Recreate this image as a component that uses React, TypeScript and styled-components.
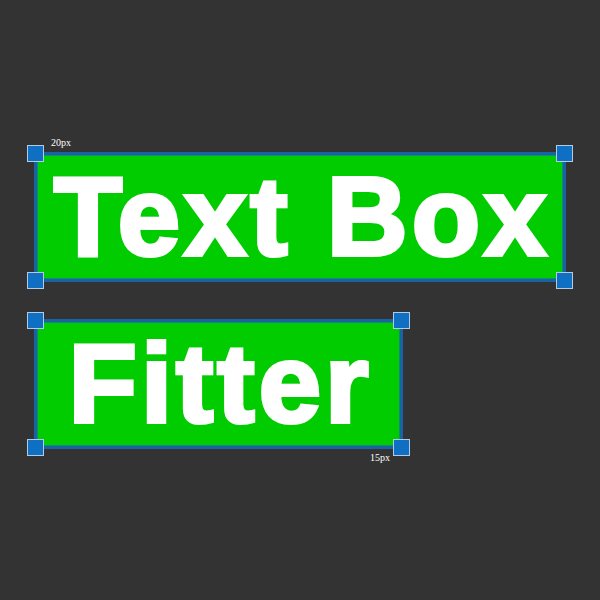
import React from 'react';
import styled, { createGlobalStyle } from 'styled-components';

const GlobalStyle = createGlobalStyle`
  html, body {
    margin: 0;
    padding: 0;
    background: #333333;
  }
  * {
    box-sizing: border-box;
  }
`;

const Canvas = styled.div`
  width: 600px;
  height: 600px;
  display: flex;
  flex-direction: column;
  align-items: flex-start;
  gap: 37px;
  padding: 152px 0 0 34px;
  background: #333333;
`;

const FitBox = styled.div<{ $width: number; $fontSize: number }>`
  position: relative;
  width: ${(p) => p.$width}px;
  height: 130px;
  display: flex;
  align-items: center;
  justify-content: center;
  background: #00cc00;
  border: 3px solid #1a62a6;
  box-shadow: inset 0 0 0 1px #0d8f6e;
  font-family: 'Liberation Sans', Arial, sans-serif;
  font-weight: 700;
  font-size: ${(p) => p.$fontSize}px;
  line-height: 1;
  color: #ffffff;
  white-space: nowrap;
`;

// heavier face than the bold cut: thicken strokes and open the spacing to match
const Label = styled.span`
  display: block;
  padding-left: 4px;
  letter-spacing: 4px;
  -webkit-text-stroke: 4px #ffffff;
  paint-order: stroke fill;
`;

const Handle = styled.div<{ $x: 'left' | 'right'; $y: 'top' | 'bottom' }>`
  position: absolute;
  ${(p) => p.$x}: -10px;
  ${(p) => p.$y}: -10px;
  width: 17px;
  height: 17px;
  background: #0f6fc2;
  border: 1px solid #b3cbe2;
`;

const Padding = styled.span<{ $corner: 'top' | 'bottom' }>`
  position: absolute;
  font-family: 'Liberation Serif', 'Times New Roman', serif;
  font-size: 10px;
  line-height: 12px;
  font-weight: 400;
  color: #ffffff;
  -webkit-text-stroke: 0;
  ${(p) =>
    p.$corner === 'top'
      ? 'top: -18px; left: 14px;'
      : 'top: calc(100% + 6px); right: 10px;'}
`;

const corners: Array<['left' | 'right', 'top' | 'bottom']> = [
  ['left', 'top'],
  ['right', 'top'],
  ['left', 'bottom'],
  ['right', 'bottom'],
];

const Selection: React.FC<{
  text: string;
  width: number;
  fontSize: number;
  padding: string;
  labelAt: 'top' | 'bottom';
}> = ({ text, width, fontSize, padding, labelAt }) => (
  <FitBox $width={width} $fontSize={fontSize}>
    <Label>{text}</Label>
    {corners.map(([x, y]) => (
      <Handle key={x + y} $x={x} $y={y} />
    ))}
    <Padding $corner={labelAt}>{padding}</Padding>
  </FitBox>
);

export default function App() {
  return (
    <>
      <GlobalStyle />
      <Canvas>
        <Selection text="Text Box" width={532} fontSize={112} padding="20px" labelAt="top" />
        <Selection text="Fitter" width={369} fontSize={112} padding="15px" labelAt="bottom" />
      </Canvas>
    </>
  );
}
